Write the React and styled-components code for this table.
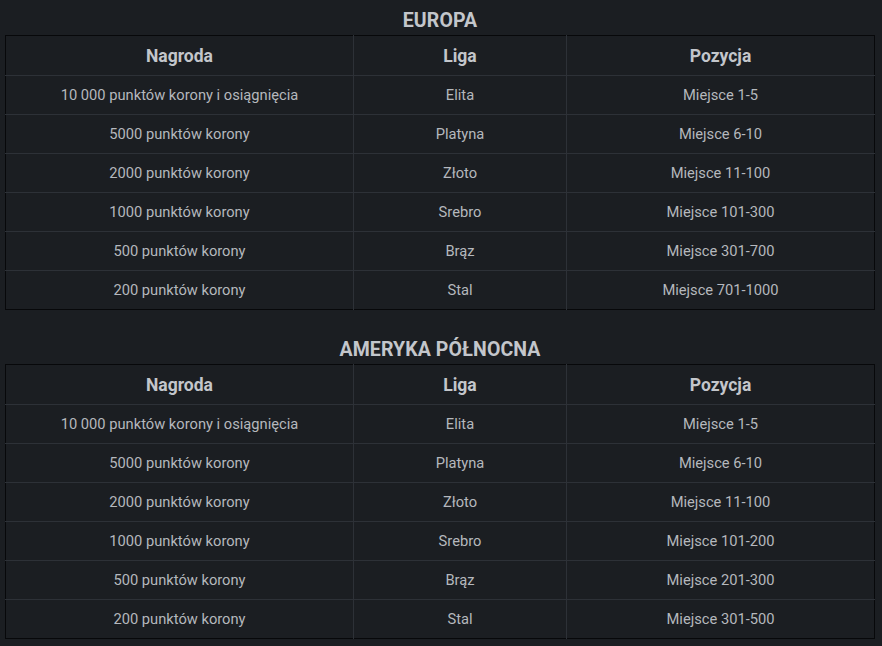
import React from "react";
import styled, { createGlobalStyle } from "styled-components";

const Global = createGlobalStyle`
  html, body { margin: 0; padding: 0; background: #1b1e22; }
  body { font-family: Roboto, "Noto Sans", sans-serif; }
`;

const Page = styled.div`
  width: 882px;
  height: 646px;
  box-sizing: border-box;
  padding: 0 7px 0 5px;
  display: flex;
  flex-direction: column;
  background: #1b1e22;
  overflow: hidden;
`;

const Section = styled.section`
  display: flex;
  flex-direction: column;
  margin-top: ${(p) => (p.$first ? "0" : "19px")};
`;

const Title = styled.h2`
  margin: 0;
  height: 35px;
  padding-top: 9px;
  box-sizing: border-box;
  text-align: center;
  font-size: 19.5px;
  line-height: 23px;
  font-weight: 700;
  color: #c3c6cb;
  letter-spacing: 0.1px;
`;

const Table = styled.table`
  width: 100%;
  border-collapse: collapse;
  border: 1px solid #07080a;
  table-layout: fixed;
`;

const Th = styled.th`
  height: 39px;
  padding: 0;
  font-size: 17.5px;
  font-weight: 700;
  color: #c3c6cb;
  text-align: center;
  border-left: 1px solid #2d3137;
  border-bottom: 1px solid #2d3137;
  &:first-child { border-left: none; }
`;

const Td = styled.td`
  height: 38px;
  padding: 0;
  font-size: 14.7px;
  color: #b5b8bd;
  text-align: center;
  border-left: 1px solid #2d3137;
  border-top: 1px solid #2d3137;
  &:first-child { border-left: none; }
`;

const europe = [
  ["10 000 punktów korony i osiągnięcia", "Elita", "Miejsce 1-5"],
  ["5000 punktów korony", "Platyna", "Miejsce 6-10"],
  ["2000 punktów korony", "Złoto", "Miejsce 11-100"],
  ["1000 punktów korony", "Srebro", "Miejsce 101-300"],
  ["500 punktów korony", "Brąz", "Miejsce 301-700"],
  ["200 punktów korony", "Stal", "Miejsce 701-1000"],
];

const na = [
  ["10 000 punktów korony i osiągnięcia", "Elita", "Miejsce 1-5"],
  ["5000 punktów korony", "Platyna", "Miejsce 6-10"],
  ["2000 punktów korony", "Złoto", "Miejsce 11-100"],
  ["1000 punktów korony", "Srebro", "Miejsce 101-200"],
  ["500 punktów korony", "Brąz", "Miejsce 201-300"],
  ["200 punktów korony", "Stal", "Miejsce 301-500"],
];

function RewardTable({ title, rows, first }) {
  return (
    <Section $first={first}>
      <Title>{title}</Title>
      <Table>
        <colgroup>
          <col style={{ width: "348px" }} />
          <col style={{ width: "213px" }} />
          <col />
        </colgroup>
        <thead>
          <tr>
            <Th>Nagroda</Th>
            <Th>Liga</Th>
            <Th>Pozycja</Th>
          </tr>
        </thead>
        <tbody>
          {rows.map((r, i) => (
            <tr key={i}>
              {r.map((c, j) => (
                <Td key={j}>{c}</Td>
              ))}
            </tr>
          ))}
        </tbody>
      </Table>
    </Section>
  );
}

export default function App() {
  return (
    <>
      <Global />
      <Page>
        <RewardTable title="EUROPA" rows={europe} first />
        <RewardTable title="AMERYKA PÓŁNOCNA" rows={na} />
      </Page>
    </>
  );
}
